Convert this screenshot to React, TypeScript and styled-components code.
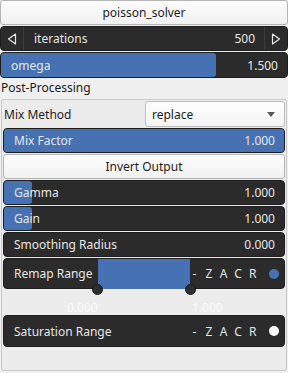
import React from 'react';
import styled, { createGlobalStyle } from 'styled-components';

const GlobalStyle = createGlobalStyle`
  html, body {
    margin: 0;
    padding: 0;
    background: #efefef;
  }
  body {
    font-family: 'Noto Sans', 'Open Sans', sans-serif;
    font-size: 12px;
    color: #1c1c1c;
  }
`;

const Page = styled.div`
  width: 288px;
  height: 373px;
  display: flex;
  flex-direction: column;
  gap: 1px;
  box-sizing: border-box;
  overflow: hidden;
`;

const PushButton = styled.div`
  height: 25px;
  flex: none;
  box-sizing: border-box;
  border: 1px solid #b4b4b4;
  border-radius: 3px;
  background: linear-gradient(#fdfdfd, #f1f1f1);
  display: flex;
  align-items: center;
  justify-content: center;
  color: #1c1c1c;
`;

const DarkRow = styled.div<{ $h?: number }>`
  position: relative;
  flex: none;
  height: ${p => p.$h ?? 25}px;
  box-sizing: border-box;
  border: 1px solid #1e1e1e;
  border-radius: 4px;
  background: #2b2b2b;
  color: #e6e6e6;
  display: flex;
  align-items: center;
`;

const ArrowCell = styled.div<{ $side: 'left' | 'right' }>`
  width: 22px;
  align-self: stretch;
  display: flex;
  align-items: center;
  justify-content: center;
  ${p => (p.$side === 'left' ? 'border-right' : 'border-left')}: 1px solid #3c3c3c;
`;

const SpinLabel = styled.span`
  flex: 1;
  padding-left: 10px;
`;

const SpinValue = styled.span`
  padding-right: 9px;
`;

const Fill = styled.div`
  position: absolute;
  left: 0;
  top: 0;
  bottom: 0;
  background: #4672b4;
  border-radius: 3px;
`;

const RowText = styled.span<{ $grow?: boolean }>`
  position: relative;
  flex: ${p => (p.$grow ? 1 : 'none')};
  padding: 0 9px 0 10px;
`;

const SectionLabel = styled.div`
  height: 18px;
  flex: none;
  line-height: 18px;
  padding-left: 1px;
  color: #1c1c1c;
`;

const GroupBox = styled.div`
  margin: 1px 1px 0 1px;
  height: 272px;
  flex: none;
  box-sizing: border-box;
  border: 1px solid #cacaca;
  border-radius: 2px;
  background: #ececec;
  padding: 1px 1px 0 1px;
  display: flex;
  flex-direction: column;
  gap: 1px;
`;

const FormRow = styled.div`
  height: 26px;
  flex: none;
  display: flex;
  align-items: center;
  justify-content: space-between;
  padding-left: 1px;
`;

const Combo = styled.div`
  width: 140px;
  height: 26px;
  box-sizing: border-box;
  border: 1px solid #bdbdbd;
  border-radius: 3px;
  background: linear-gradient(#fefefe, #f4f4f4);
  display: flex;
  align-items: center;
  justify-content: space-between;
  padding: 0 9px 0 6px;
`;

const Toggles = styled.div`
  position: relative;
  display: flex;
  align-items: center;
  margin-left: auto;
  padding-right: 5px;
`;

const ToggleKey = styled.span`
  width: 14.6px;
  text-align: center;
  color: #e6e6e6;
`;

const Dot = styled.span<{ $on: boolean }>`
  width: 10px;
  height: 10px;
  border-radius: 50%;
  margin-left: 9px;
  background: ${p => (p.$on ? '#4672b4' : '#ffffff')};
`;

const RangeFill = styled.div`
  position: absolute;
  left: 94px;
  width: 92px;
  top: 0;
  bottom: -1px;
  background: #4672b4;
`;

const Handle = styled.div`
  position: absolute;
  bottom: -7px;
  width: 11px;
  height: 11px;
  margin-left: -6px;
  border-radius: 50%;
  background: #2e2e2e;
  border: 1px solid #1a1a1a;
  box-sizing: border-box;
`;

const RangeLabels = styled.div`
  position: relative;
  flex: none;
  height: 24px;
  color: #fbfbfb;
`;

const RangeLabel = styled.span`
  position: absolute;
  top: 11px;
  line-height: 14px;
`;

const Slider = ({ label, value, pct }: { label: string; value: string; pct: number }) => (
  <DarkRow>
    {pct > 0 && <Fill style={{ width: `${pct}%` }} />}
    <RowText $grow>{label}</RowText>
    <RowText>{value}</RowText>
  </DarkRow>
);

const ZacrToggles = ({ on }: { on: boolean }) => (
  <Toggles>
    {['-', 'Z', 'A', 'C', 'R'].map(k => (
      <ToggleKey key={k}>{k}</ToggleKey>
    ))}
    <Dot $on={on} />
  </Toggles>
);

const Triangle = ({ dir }: { dir: 'left' | 'right' }) => (
  <svg width="10" height="12" viewBox="0 0 10 12">
    <path
      d={dir === 'left' ? 'M8.5 1 L1.5 6 L8.5 11 Z' : 'M1.5 1 L8.5 6 L1.5 11 Z'}
      fill="none"
      stroke="#e6e6e6"
      strokeWidth="1.2"
      strokeLinejoin="round"
    />
  </svg>
);

export default function App() {
  return (
    <Page>
      <GlobalStyle />
      <PushButton>poisson_solver</PushButton>
      <DarkRow>
        <ArrowCell $side="left"><Triangle dir="left" /></ArrowCell>
        <SpinLabel>iterations</SpinLabel>
        <SpinValue>500</SpinValue>
        <ArrowCell $side="right"><Triangle dir="right" /></ArrowCell>
      </DarkRow>
      <DarkRow $h={26}>
        <Fill style={{ width: '75%' }} />
        <RowText $grow>omega</RowText>
        <RowText>1.500</RowText>
      </DarkRow>
      <SectionLabel>Post-Processing</SectionLabel>
      <GroupBox>
        <FormRow>
          <span>Mix Method</span>
          <Combo>
            <span>replace</span>
            <svg width="8" height="5" viewBox="0 0 8 5">
              <path d="M0 0 L8 0 L4 5 Z" fill="#555" />
            </svg>
          </Combo>
        </FormRow>
        <Slider label="Mix Factor" value="1.000" pct={100} />
        <PushButton>Invert Output</PushButton>
        <Slider label="Gamma" value="1.000" pct={10} />
        <Slider label="Gain" value="1.000" pct={10} />
        <Slider label="Smoothing Radius" value="0.000" pct={0} />
        <DarkRow $h={31}>
          <RangeFill />
          <Handle style={{ left: 94 }} />
          <Handle style={{ left: 187 }} />
          <RowText>Remap Range</RowText>
          <ZacrToggles on />
        </DarkRow>
        <RangeLabels>
          <RangeLabel style={{ left: 64 }}>0.000</RangeLabel>
          <RangeLabel style={{ left: 189 }}>1.000</RangeLabel>
        </RangeLabels>
        <DarkRow $h={32}>
          <RowText>Saturation Range</RowText>
          <ZacrToggles on={false} />
        </DarkRow>
      </GroupBox>
    </Page>
  );
}
